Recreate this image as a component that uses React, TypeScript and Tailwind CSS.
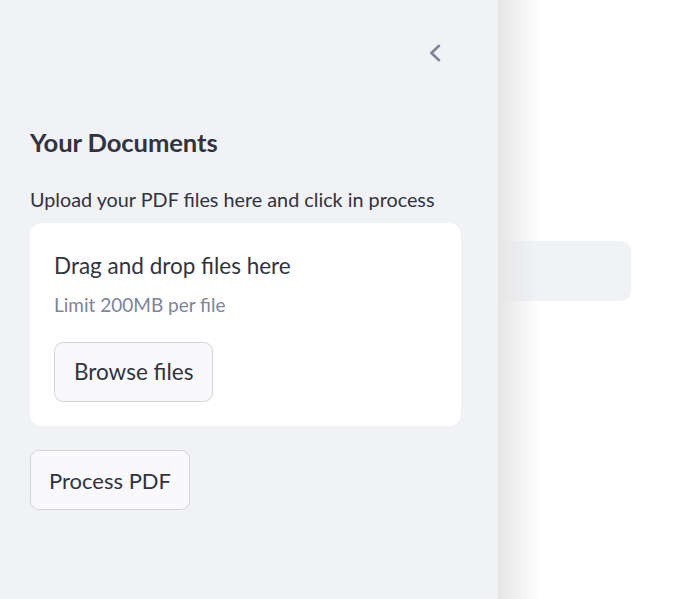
import React from "react";

export default function App() {
  return (
    <div
      className="flex h-[599px] w-[695px] overflow-hidden bg-white text-[#31333f]"
      style={{ fontFamily: "Lato, 'Noto Sans', sans-serif" }}
    >
      <aside className="relative z-10 flex w-[498px] shrink-0 flex-col bg-[#f0f2f6] pl-[30px] pr-[37px]">
        <div className="flex h-[126px] shrink-0 items-start justify-end pr-[20px] pt-[44px]">
          <svg width="12" height="18" viewBox="0 0 12 18" fill="none" stroke="#808495" strokeWidth="2.6" strokeLinecap="round" strokeLinejoin="round">
            <path d="M10 1.8L2.4 9l7.6 7.2" />
          </svg>
        </div>
        <h2 className="text-[25.6px] font-bold leading-[32px] tracking-[-0.1px]">Your Documents</h2>
        <p className="mt-[27px] text-[19.8px] leading-[28px]">Upload your PDF files here and click in process</p>
        <div className="mt-[10px] flex flex-col items-start rounded-[12px] bg-white px-[24px] pb-[24px] pt-[28px]">
          <div className="text-[22.5px] leading-[30px]">Drag and drop files here</div>
          <div className="mt-[11px] text-[19px] leading-[26px] text-[#808495]">Limit 200MB per file</div>
          <button className="mt-[24px] h-[60px] rounded-[9px] border border-[#d4d5da] bg-[#f9f9fb] px-[19px] text-[22.5px]">
            Browse files
          </button>
        </div>
        <button className="mt-[24px] h-[60px] w-fit rounded-[9px] border border-[#d4d5da] bg-[#f9f9fb] px-[18px] text-[22px]">
          Process PDF
        </button>
        <div className="pointer-events-none absolute right-[-42px] top-0 h-full w-[42px] bg-gradient-to-r from-[#e6e6e6] to-transparent" />
      </aside>
      <main className="flex-1 pt-[241px]">
        <div className="h-[60px] w-[133px] rounded-r-[10px] bg-[#f0f2f6]" />
      </main>
    </div>
  );
}
